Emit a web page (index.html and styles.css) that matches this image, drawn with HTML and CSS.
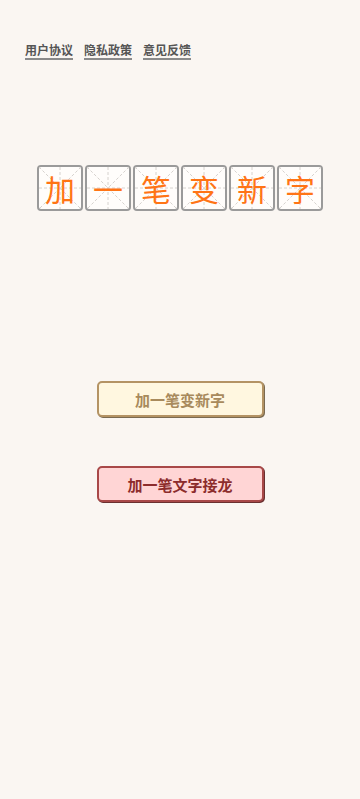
FILE: index.html
```html
<!DOCTYPE html>
<html lang="zh">
<head>
<meta charset="utf-8">
<meta name="viewport" content="width=device-width, initial-scale=1">
<link rel="stylesheet" href="styles.css">
</head>
<body>
<div class="page">
  <nav class="links">
    <a class="link" href="#">用户协议</a>
    <a class="link" href="#">隐私政策</a>
    <a class="link" href="#">意见反馈</a>
  </nav>
  <div class="title">
    <div class="cell"><svg class="grid" viewBox="0 0 42 42"><path d="M0 0L42 42M42 0L0 42M21 0V42M0 21H42"/></svg><span class="ch">加</span></div>
    <div class="cell"><svg class="grid" viewBox="0 0 42 42"><path d="M0 0L42 42M42 0L0 42M21 0V42M0 21H42"/></svg><span class="ch">一</span></div>
    <div class="cell"><svg class="grid" viewBox="0 0 42 42"><path d="M0 0L42 42M42 0L0 42M21 0V42M0 21H42"/></svg><span class="ch">笔</span></div>
    <div class="cell"><svg class="grid" viewBox="0 0 42 42"><path d="M0 0L42 42M42 0L0 42M21 0V42M0 21H42"/></svg><span class="ch">变</span></div>
    <div class="cell"><svg class="grid" viewBox="0 0 42 42"><path d="M0 0L42 42M42 0L0 42M21 0V42M0 21H42"/></svg><span class="ch">新</span></div>
    <div class="cell"><svg class="grid" viewBox="0 0 42 42"><path d="M0 0L42 42M42 0L0 42M21 0V42M0 21H42"/></svg><span class="ch">字</span></div>
  </div>
  <div class="buttons">
    <button class="btn btn-gold">加一笔变新字</button>
    <button class="btn btn-red">加一笔文字接龙</button>
  </div>
</div>
</body>
</html>
```
FILE: styles.css
```css
html, body {
  margin: 0;
  padding: 0;
  background: #faf6f2;
}
body {
  font-family: "Noto Sans CJK SC", "Noto Sans", sans-serif;
  min-height: 799px;
}
.page {
  display: flex;
  flex-direction: column;
}
.links {
  display: flex;
  gap: 11px;
  padding: 42px 0 0 25px;
}
.link {
  font-size: 12px;
  line-height: 16px;
  font-weight: 700;
  color: #555;
  text-decoration: none;
  border-bottom: 2px solid #8a8a8a;
  padding-bottom: 0;
}
.title {
  display: flex;
  justify-content: center;
  gap: 2px;
  margin-top: 105px;
}
.cell {
  position: relative;
  width: 42px;
  height: 42px;
  border: 2px solid #9a9a9a;
  border-radius: 4px;
  background: #fffdfb;
  display: flex;
  align-items: center;
  justify-content: center;
}
.grid {
  position: absolute;
  left: 0;
  top: 0;
  width: 42px;
  height: 42px;
}
.grid path {
  stroke: #d6d2ce;
  stroke-width: 1;
  stroke-dasharray: 3 2;
  fill: none;
}
.ch {
  position: relative;
  font-size: 30px;
  line-height: 42px;
  color: #ff7415;
}
.buttons {
  display: flex;
  flex-direction: column;
  align-items: center;
  gap: 49px;
  margin-top: 170px;
}
.btn {
  width: 167px;
  height: 36px;
  border-radius: 5px;
  font-family: "Noto Sans CJK SC", "Noto Sans", sans-serif;
  font-size: 15px;
  font-weight: 700;
  padding: 0;
  display: flex;
  align-items: center;
  justify-content: center;
}
.btn-gold {
  background: #fff7e0;
  border: 2px solid #b49364;
  color: #a88a5c;
  box-shadow: 1px 1px 0 #7a6a50;
}
.btn-red {
  background: #ffd5d5;
  border: 2px solid #a84848;
  color: #8c2c2c;
  box-shadow: 1px 1px 0 #6a3030;
}
```
